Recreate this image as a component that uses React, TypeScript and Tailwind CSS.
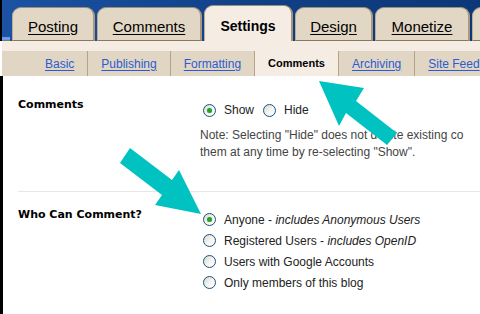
import React from "react";

const tabs = [
  { label: "Posting", width: "w-[83px]" },
  { label: "Comments", width: "w-[105px]" },
  { label: "Settings", width: "w-[89px]", active: true },
  { label: "Design", width: "w-[78px]" },
  { label: "Monetize", width: "w-[95px]" },
  { label: "", width: "w-[90px]" },
];

const subTabs = [
  { label: "Basic" },
  { label: "Publishing" },
  { label: "Formatting" },
  { label: "Comments", active: true },
  { label: "Archiving" },
  { label: "Site Feed" },
];

const Radio = ({ checked = false, className = "" }: { checked?: boolean; className?: string }) => (
  <span
    className={`flex h-[13px] w-[13px] shrink-0 items-center justify-center rounded-full border border-[#1c5180] bg-gradient-to-br from-[#d8d7cf] via-[#f4f4f0] to-white ${className}`}
  >
    {checked && (
      <span className="h-[5px] w-[5px] rounded-full bg-[#2aa02a] shadow-[0_0_1px_#7ad97a]" />
    )}
  </span>
);

const App = () => {
  return (
    <div className="relative h-[314px] w-[480px] overflow-hidden bg-white font-['Liberation_Sans',Arial,sans-serif]">
      {/* TABS */}
      <div className="flex h-[41px]">
        <div className="w-[2px] shrink-0 bg-black" />
        <div className="flex flex-1 items-end gap-[2px] bg-gradient-to-r from-[#1b52a4] via-[#0f3f84] to-[#0a3573]">
          <div className="flex h-[4px] w-[8px] shrink-0 border-b border-[#8a7760] bg-[#6b9ae6]" />
          {tabs.map((tab, i) =>
            tab.active ? (
              <div
                key={i}
                className={`${tab.width} flex h-[36px] shrink-0 items-center justify-center rounded-t-[9px] border-t border-l border-r-2 border-t-[#9a8f7c] border-l-[#b9ad98] border-r-[#a8947a] bg-[#f5ede4] pt-[5px] text-[14px] font-bold text-black`}
              >
                {tab.label}
              </div>
            ) : (
              <div
                key={i}
                className={`${tab.width} flex h-[34px] shrink-0 items-center justify-center rounded-t-[9px] border-t border-l border-r-2 border-b border-t-[#9a8f7c] border-l-[#b9ad98] border-r-[#ac987e] border-b-[#8a7760] bg-[#e2d7c4] pt-[7px] text-[15px] text-black underline underline-offset-[2px]`}
              >
                {tab.label}
              </div>
            )
          )}
        </div>
      </div>

      {/* SUB TABS */}
      <div className="flex">
        <div className="w-[2px] shrink-0 bg-white" />
        <div className="flex-1">
          <div className="h-[10px] bg-[#f5ede4]" />
          <div className="flex h-[25px] bg-[#e1d6c3] pl-[30px]">
            {subTabs.map((sub, i) => (
              <div
                key={i}
                className={`flex shrink-0 items-center whitespace-nowrap px-[13px] ${
                  i === subTabs.length - 1 ? "" : "border-r border-[#b5a389]"
                } ${
                  sub.active
                    ? "bg-[#f5ede4] text-[11px] font-bold text-black"
                    : "text-[12px] text-[#2a5bd3] underline underline-offset-[2px]"
                }`}
              >
                {sub.label}
              </div>
            ))}
          </div>
        </div>
      </div>

      {/* CONTENT */}
      <div className="flex h-[238px]">
        <div className="w-[3px] shrink-0 bg-black" />
        <div className="flex-1 pl-[15px]">
          {/* Comments section */}
          <div className="grid grid-cols-[182px_1fr] pt-[20px] pb-[30px]">
            <div className="font-['DejaVu_Sans',Verdana,sans-serif] text-[11px] font-bold leading-[18px] text-black">
              Comments
            </div>
            <div className="pt-[5px]">
              <div className="flex h-[18px] items-center text-[12px] text-[#222]">
                <Radio checked className="ml-[3px]" />
                <span className="ml-[8px]">Show</span>
                <Radio className="ml-[9px]" />
                <span className="ml-[8px]">Hide</span>
              </div>
              <p className="mt-[8px] whitespace-nowrap text-[12px] leading-[17px] text-[#444]">
                Note: Selecting "Hide" does not delete existing co
                <br />
                them at any time by re-selecting "Show".
              </p>
            </div>
          </div>

          {/* Who can comment section */}
          <div className="grid grid-cols-[182px_1fr] border-t border-[#e6e6e6]">
            <div className="pt-[14px] font-['DejaVu_Sans',Verdana,sans-serif] text-[11px] font-bold leading-[18px] text-black">
              Who Can Comment?
            </div>
            <div className="pt-[17px] text-[12px] text-[#222]">
              <div className="flex h-[21px] items-center">
                <Radio checked className="ml-[3px]" />
                <span className="ml-[8px]">
                  Anyone - <em>includes Anonymous Users</em>
                </span>
              </div>
              <div className="flex h-[21px] items-center">
                <Radio className="ml-[3px]" />
                <span className="ml-[8px]">
                  Registered Users - <em>includes OpenID</em>
                </span>
              </div>
              <div className="flex h-[21px] items-center">
                <Radio className="ml-[3px]" />
                <span className="ml-[8px]">Users with Google Accounts</span>
              </div>
              <div className="flex h-[21px] items-center">
                <Radio className="ml-[3px]" />
                <span className="ml-[8px]">Only members of this blog</span>
              </div>
            </div>
          </div>
        </div>
      </div>

      {/* ARROWS */}
      <svg
        className="pointer-events-none absolute inset-0"
        width="480"
        height="314"
        viewBox="0 0 480 314"
      >
        <polygon
          points="319,81 364,88 356,101 397,133 387,145 346,113 339,126"
          fill="#00c2c0"
        />
        <polygon
          points="130,148 172,180 179,170 201,214 155,205 162,195 120,163"
          fill="#00c2c0"
        />
      </svg>
    </div>
  );
};

export default App;
